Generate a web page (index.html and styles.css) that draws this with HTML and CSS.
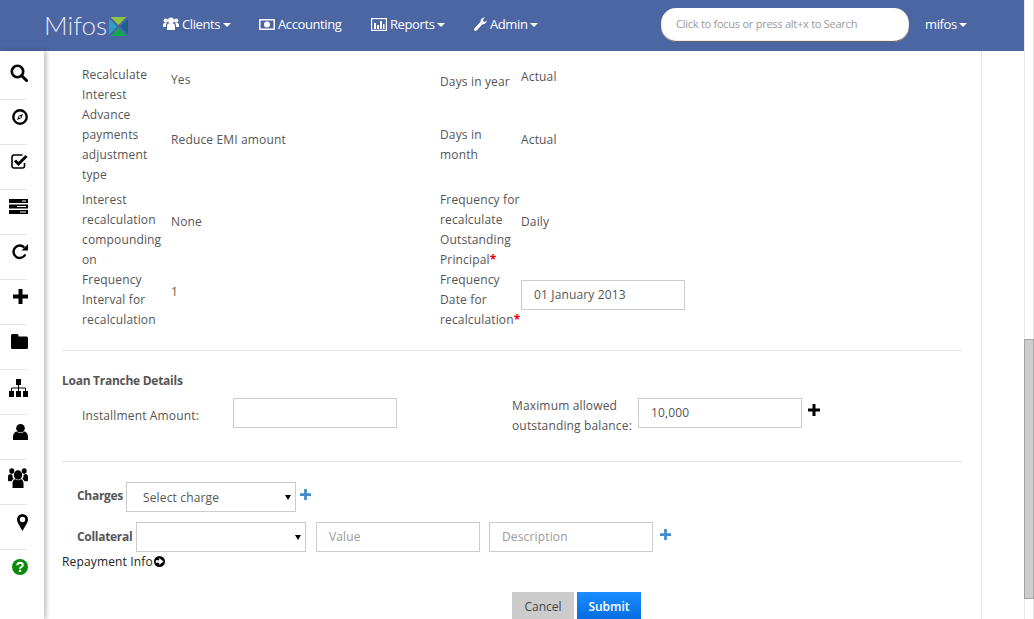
FILE: index.html
```html
<!DOCTYPE html>
<html lang="en">
<head>
  <meta charset="UTF-8">
  <title>Mifos</title>
  <link rel="stylesheet" href="styles.css">
</head>
<body>
  <div class="page">
    <header class="navbar">
      <div class="logo">
        <span class="logo-text">Mifos</span>
        <svg class="logo-mark" width="19" height="19" viewBox="0 0 19 19">
          <polygon points="1.500,0 17.500,0 9.500,8" fill="#8cc63f"/>
          <polygon points="0,1.500 8,9.500 0,17.500" fill="#2a9fc9"/>
          <polygon points="19,1.500 19,17.500 11,9.500" fill="#1c5f8f"/>
          <polygon points="1.500,19 17.500,19 9.500,11" fill="#12a84f"/>
        </svg>
      </div>
      <nav class="nav-links">
        <a class="nav-item nav-clients">
          <svg width="16" height="14" viewBox="0 0 16 14" fill="#fff"><circle cx="8" cy="3.500" r="3"/><circle cx="2.800" cy="3.600" r="2.200"/><circle cx="13.200" cy="3.600" r="2.200"/><path d="M4 13V9c0-2 1.500-3 4-3s4 1 4 3v4z"/><path d="M0 10V7.500C0 6.500 1 6 3 6c.6 0 .9.2 0 2v2zM16 10V7.500C16 6.500 15 6 13 6c-.6 0-.9.2 0 2v2z"/></svg>
          Clients<span class="caret"></span>
        </a>
        <a class="nav-item nav-accounting">
          <svg width="16" height="11" viewBox="0 0 16 11"><rect width="16" height="11" rx="1" fill="#fff"/><rect x="1.500" y="1.500" width="13" height="8" fill="#4c65a3"/><circle cx="8" cy="5.500" r="3" fill="#fff"/></svg>
          Accounting
        </a>
        <a class="nav-item nav-reports">
          <svg width="16" height="13" viewBox="0 0 16 13"><rect x=".6" y=".6" width="14.800" height="11.800" fill="none" stroke="#fff" stroke-width="1.200"/><path d="M3 5h2v6H3zM6 7h2v4H6zM9 3h2v8H9zM12 6h1.500v5H12z" fill="#fff"/></svg>
          Reports<span class="caret"></span>
        </a>
        <a class="nav-item nav-admin">
          <svg width="13" height="14" viewBox="0 0 13 14"><path d="M1.500 12.500L7.500 6" stroke="#fff" stroke-width="3" stroke-linecap="round"/><path d="M12.800 3.200a4 4 0 0 1-6 3.500L6.500 3.500C7.500 1 9.500.2 11 .6L8.800 2.800l.6 1.800 1.600.4z" fill="#fff"/></svg>
          Admin<span class="caret"></span>
        </a>
      </nav>
      <div class="search-box">Click to focus or press alt+x to Search</div>
      <a class="nav-item nav-user">mifos<span class="caret"></span></a>
    </header>

    <div class="layout">
      <aside class="sidebar">
        <div class="side-item side-first">
          <svg width="18" height="18" viewBox="0 0 18 18" fill="none" stroke="#000"><circle cx="7.500" cy="7.500" r="5.700" stroke-width="2.600"/><path d="M11.800 11.800l4.700 4.700" stroke-width="3" stroke-linecap="round"/></svg>
        </div>
        <div class="side-item">
          <svg width="16" height="16" viewBox="0 0 16 16"><circle cx="8" cy="8" r="6.700" fill="none" stroke="#000" stroke-width="2.400"/><path d="M11 5L9.300 9.300 5 11l1.700-4.300z" fill="#000"/><circle cx="8" cy="8" r=".9" fill="#fff"/></svg>
        </div>
        <div class="side-item">
          <svg width="17" height="15" viewBox="0 0 17 15" fill="none" stroke="#000"><path d="M13.500 9v3a2 2 0 0 1-2 2h-9a2 2 0 0 1-1.500-2V3a2 2 0 0 1 1.500-2h9" stroke-width="1.600"/><path d="M4 6.500l3.500 3.500L15.500 2" stroke-width="3"/></svg>
        </div>
        <div class="side-item">
          <svg width="19" height="15" viewBox="0 0 19 15"><path d="M0 0h19v4H0zM0 5.500h19v4H0zM0 11h19v4H0z" fill="#000"/><path d="M13 1.500h4v1h-4zM8 7h9v1H8zM11 12.500h6v1h-6z" fill="#fff"/></svg>
        </div>
        <div class="side-item">
          <svg width="16" height="16" viewBox="0 0 16 16" fill="none"><path d="M13.300 10.500A6.200 6.200 0 1 1 12.300 3.500" stroke="#000" stroke-width="2.400"/><path d="M16 0v6.500H9.500z" fill="#000"/></svg>
        </div>
        <div class="side-item">
          <svg width="15" height="15" viewBox="0 0 15 15"><path d="M5.500 0h4v5.500H15v4H9.500V15h-4V9.500H0v-4h5.500z" fill="#000"/></svg>
        </div>
        <div class="side-item">
          <svg width="17" height="15" viewBox="0 0 17 15"><path d="M1.500 0h4.500a1.500 1.500 0 0 1 1.500 1.500V2.500h8A1.500 1.500 0 0 1 17 4v9.500a1.500 1.500 0 0 1-1.500 1.500h-14A1.500 1.500 0 0 1 0 13.500v-12A1.500 1.500 0 0 1 1.500 0z" fill="#000"/></svg>
        </div>
        <div class="side-item">
          <svg width="19" height="18" viewBox="0 0 19 18"><path d="M7 0h5v6H7zM0 12h5v6H0zM7 12h5v6H7zM14 12h5v6h-5z" fill="#000"/><path d="M9.500 6v6M2.500 12V9h14v3" fill="none" stroke="#000"/></svg>
        </div>
        <div class="side-item">
          <svg width="15" height="16" viewBox="0 0 15 16"><circle cx="7.500" cy="4.300" r="4.300" fill="#000"/><path d="M0 16v-3.500C0 9.500 2 7.500 4 7.500c1 1 2.200 1.500 3.500 1.500s2.500-.5 3.500-1.500c2 0 4 2 4 5V16z" fill="#000"/></svg>
        </div>
        <div class="side-item side-users">
          <svg width="20" height="20" viewBox="0 0 20 18" preserveAspectRatio="none" fill="#000"><circle cx="10" cy="6.300" r="4.200"/><circle cx="3.800" cy="2.800" r="2.500"/><circle cx="16.200" cy="2.800" r="2.500"/><path d="M4.500 18v-4c0-2.500 1.500-3.800 3-3.800.8.500 1.600.8 2.500.8s1.700-.3 2.500-.8c1.500 0 3 1.300 3 3.800v4z"/><path d="M0 11V8c0-1.500 1-2.500 2.500-2.500.7.400 1.400.6 2 .5-.3 2 .3 3 1.200 3.800C4.500 10.300 3.800 11 3.500 12H1a1 1 0 0 1-1-1zM20 11V8c0-1.500-1-2.500-2.500-2.500-.7.400-1.400.6-2 .5.300 2-.3 3-1.200 3.800 1.200.5 1.900 1.200 2.200 2.200H19a1 1 0 0 0 1-1z"/></svg>
        </div>
        <div class="side-item">
          <svg width="11" height="17" viewBox="0 0 11 17"><path d="M5.500 0A5.500 5.500 0 0 0 0 5.500C0 8.500 3.500 13 5.500 17c2-4 5.500-8.500 5.500-11.500A5.500 5.500 0 0 0 5.500 0zm0 8.200a2.700 2.700 0 1 1 0-5.400 2.700 2.700 0 0 1 0 5.400z" fill="#000"/></svg>
        </div>
        <div class="side-item">
          <svg width="16" height="16" viewBox="0 0 16 16"><circle cx="8" cy="8" r="8" fill="#0a8a0a"/><path d="M5.300 6.200C5.300 4.500 6.500 3.700 8 3.700s2.800.9 2.800 2.300c0 2-2.800 2-2.800 3.700" fill="none" stroke="#fff" stroke-width="2"/><rect x="6.900" y="10.800" width="2.200" height="2.200" fill="#fff"/></svg>
        </div>
      </aside>

      <main class="content">
        <div class="detail-grid">
          <div class="label">Recalculate Interest</div>
          <div class="pt5">Yes</div>
          <div class="pt7">Days in year</div>
          <div class="pt2">Actual</div>

          <div class="label">Advance payments adjustment type</div>
          <div class="pt25">Reduce EMI amount</div>
          <div class="pt20">Days in month</div>
          <div class="pt25">Actual</div>

          <div class="label pt5">Interest recalculation compounding on</div>
          <div class="pt27">None</div>
          <div class="pt5">Frequency for recalculate Outstanding Principal<span class="required">*</span></div>
          <div class="pt27">Daily</div>

          <div class="label">Frequency Interval for recalculation</div>
          <div class="pt12 value-brown">1</div>
          <div>Frequency Date for recalculation<span class="required">*</span></div>
          <div class="pt10"><input class="field" type="text" value="01 January 2013"></div>
        </div>

        <hr class="divider divider-first">

        <h4 class="section-title">Loan Tranche Details</h4>
        <div class="tranche-row">
          <label class="tranche-label">Installment Amount:</label>
          <input class="field tranche-input" type="text">
          <label class="tranche-max">Maximum allowed outstanding balance:</label>
          <input class="field tranche-input" type="text" value="10,000">
          <svg class="add-black" width="12" height="12" viewBox="0 0 12 12"><path d="M4.500 0h3v4.500H12v3H7.500V12h-3V7.500H0v-3h4.500z" fill="#000"/></svg>
        </div>

        <hr class="divider divider-second">

        <div class="charge-row">
          <label class="bold-label label-charges">Charges</label>
          <div class="select-box">Select charge<span class="select-arrow"></span></div>
          <svg class="add-blue" width="11" height="11" viewBox="0 0 12 12"><path d="M4.500 0h3v4.500H12v3H7.500V12h-3V7.500H0v-3h4.500z" fill="#428bca"/></svg>
        </div>
        <div class="collateral-row">
          <label class="bold-label label-collateral">Collateral</label>
          <div class="select-box select-collateral"><span class="select-arrow"></span></div>
          <input class="field" type="text" placeholder="Value">
          <input class="field field-desc" type="text" placeholder="Description">
          <svg class="add-blue add-collateral" width="11" height="11" viewBox="0 0 12 12"><path d="M4.500 0h3v4.500H12v3H7.500V12h-3V7.500H0v-3h4.500z" fill="#428bca"/></svg>
        </div>
        <div class="repayment-link">
          Repayment Info<svg class="info-arrow" width="11" height="11" viewBox="0 0 11 11"><circle cx="5.500" cy="5.500" r="5.500" fill="#000"/><path d="M1.800 4.300h3.400V2L9.500 5.500 5.200 9V6.700H1.800z" fill="#fff"/></svg>
        </div>
        <div class="button-row">
          <button class="btn btn-cancel" type="button">Cancel</button>
          <button class="btn btn-submit" type="button">Submit</button>
        </div>
      </main>
    </div>
  </div>
  <div class="scrollbar"><div class="scroll-thumb"></div></div>
</body>
</html>
```

FILE: styles.css
```css
html, body {
  margin: 0;
  height: 100%;
  overflow: hidden;
}
body {
  display: flex;
  font-family: "Open Sans", sans-serif;
  font-size: 12px;
  line-height: 20px;
  letter-spacing: .15px;
  color: #555;
  background-color: #fff;
}
.page {
  width: 1024px;
  flex: none;
  display: flex;
  flex-direction: column;
  height: 619px;
}

/* top bar */
.navbar {
  height: 51px;
  flex: none;
  display: flex;
  align-items: center;
  background-color: #4c65a3;
  color: #fff;
  font-size: 13px;
  letter-spacing: -.4px;
}
.logo {
  display: flex;
  align-items: center;
  width: 163px;
  padding-left: 44px;
  box-sizing: border-box;
  flex: none;
}
.logo-text {
  font-family: "Lato", sans-serif;
  font-weight: 300;
  font-size: 26px;
  letter-spacing: 0;
  color: #e4e8f2;
  width: 65px;
  padding-bottom: 2px;
}
.logo-mark {
  margin-top: 2px;
}
.nav-links {
  display: flex;
  width: 498px;
  flex: none;
  padding-bottom: 3px;
  box-sizing: border-box;
}
.nav-item {
  display: flex;
  align-items: center;
  gap: 3px;
  white-space: nowrap;
}
.nav-clients { width: 96px; }
.nav-accounting { width: 112px; }
.nav-reports { width: 103px; }
.caret {
  width: 0;
  height: 0;
  margin-top: 2px;
  border-left: 4px solid transparent;
  border-right: 4px solid transparent;
  border-top: 4px solid #fff;
}
.search-box {
  width: 248px;
  height: 34px;
  box-sizing: border-box;
  padding-left: 15px;
  line-height: 31px;
  background-color: #fff;
  border-radius: 15px;
  box-shadow: inset 0 -1px 1px #555, 0 0 1px #555;
  color: #999;
  font-size: 11px;
  letter-spacing: -.25px;
  flex: none;
  margin-top: -1px;
}
.nav-user {
  margin-left: 16px;
  padding-bottom: 3px;
  gap: 2px;
}

/* left icons */
.layout {
  flex: 1;
  display: flex;
  min-height: 0;
}
.sidebar {
  width: 44px;
  flex: none;
  box-shadow: 2px 0 5px rgba(0, 0, 0, .28);
  position: relative;
}
.side-item {
  width: 27px;
  display: flex;
  justify-content: flex-end;
  align-items: flex-start;
  padding-top: 9px;
  height: 35px;
  border-top: 1px solid #e5e5e5;
}
.side-item svg {
  margin-right: -1px;
}
.side-first {
  border-top: none;
  height: 35px;
  padding-top: 13px;
}
.side-users {
  padding-top: 8px;
  height: 36px;
}

/* form */
.content {
  width: 938px;
  box-sizing: border-box;
  flex: none;
  padding: 14px 0 0 18px;
  border-right: 1px solid #e5e5e5;
}
.detail-grid {
  display: grid;
  grid-template-columns: 89px 269px 81px 1fr;
  margin-left: 20px;
}
.pt2 { padding-top: 2px; }
.pt5 { padding-top: 5px; }
.pt7 { padding-top: 7px; }
.pt10 { padding-top: 10px; }
.pt12 { padding-top: 12px; }
.pt20 { padding-top: 20px; }
.pt25 { padding-top: 25px; }
.pt27 { padding-top: 27px; }
.value-brown { color: #6b5a48; }
.required { color: #e00; font-weight: 700; }
.field {
  width: 164px;
  height: 30px;
  box-sizing: border-box;
  border: 1px solid #ccc;
  padding: 0 12px 2px;
  font-family: "Open Sans", sans-serif;
  font-size: 12px;
  letter-spacing: .15px;
  color: #555;
  background-color: #fff;
  margin: 0;
  outline: none;
}
.field::placeholder { color: #999; opacity: 1; }
.divider {
  width: 900px;
  margin: 0;
  border: none;
  border-top: 1px solid #e5e5e5;
}
.divider-first { margin-top: 20px; }
.divider-second { margin-top: 25px; }
.section-title {
  margin: 20px 0 0;
  font-size: 12px;
  font-weight: 700;
  letter-spacing: -.27px;
  line-height: 20px;
}
.tranche-row {
  display: flex;
  align-items: flex-start;
  margin: 5px 0 0 20px;
}
.tranche-label {
  width: 151px;
  padding-top: 10px;
}
.tranche-input { margin-top: 2px; }
.tranche-max {
  width: 126px;
  margin-left: 115px;
}
.add-black {
  margin: 8px 0 0 6px;
}
.charge-row {
  display: flex;
  align-items: flex-start;
  margin: 20px 0 0 15px;
}
.bold-label {
  font-weight: 700;
  letter-spacing: -.3px;
  white-space: nowrap;
  flex: none;
}
.label-charges { width: 49px; padding-top: 4px; }
.label-collateral { width: 59px; padding-top: 5px; }
.select-box {
  width: 170px;
  height: 30px;
  box-sizing: border-box;
  border: 1px solid #ccc;
  padding-left: 16px;
  line-height: 29px;
  display: flex;
  justify-content: space-between;
  align-items: center;
  flex: none;
}
.select-collateral { justify-content: flex-end; }
.select-arrow {
  width: 0;
  height: 0;
  margin-right: 4px;
  border-left: 3px solid transparent;
  border-right: 3px solid transparent;
  border-top: 5px solid #000;
}
.add-blue {
  margin: 7px 0 0 4px;
}
.collateral-row {
  display: flex;
  align-items: flex-start;
  margin: 10px 0 0 15px;
}
.collateral-row .select-box { margin-right: 10px; }
.field-desc { margin-left: 9px; }
.add-collateral { margin-left: 7px; }
.repayment-link {
  display: flex;
  align-items: center;
  color: #222;
  margin-top: -1px;
  padding-top: 1px;
}
.info-arrow {
  margin: -1px 0 0 1px;
}
.button-row {
  display: flex;
  gap: 3px;
  margin: 20px 0 0 450px;
}
.btn {
  height: 30px;
  border: none;
  padding: 0 0 2px;
  font-family: "Open Sans", sans-serif;
  font-size: 12px;
}
.btn-cancel {
  width: 62px;
  background-color: #ccc;
  color: #444;
}
.btn-submit {
  width: 64px;
  background: linear-gradient(#1b8cff, #0569e0);
  color: #fff;
  font-weight: 600;
}

/* page scrollbar */
.scrollbar {
  width: 10px;
  height: 619px;
  flex: none;
  box-sizing: border-box;
  border-left: 1px solid #e8e8e8;
  border-right: 1px solid #e8e8e8;
  padding-top: 339px;
}
.scroll-thumb {
  height: 260px;
  margin: 0 -1px;
  box-sizing: border-box;
  background-color: #cdcdcd;
  border: 1px solid #a6a6a6;
}
```
